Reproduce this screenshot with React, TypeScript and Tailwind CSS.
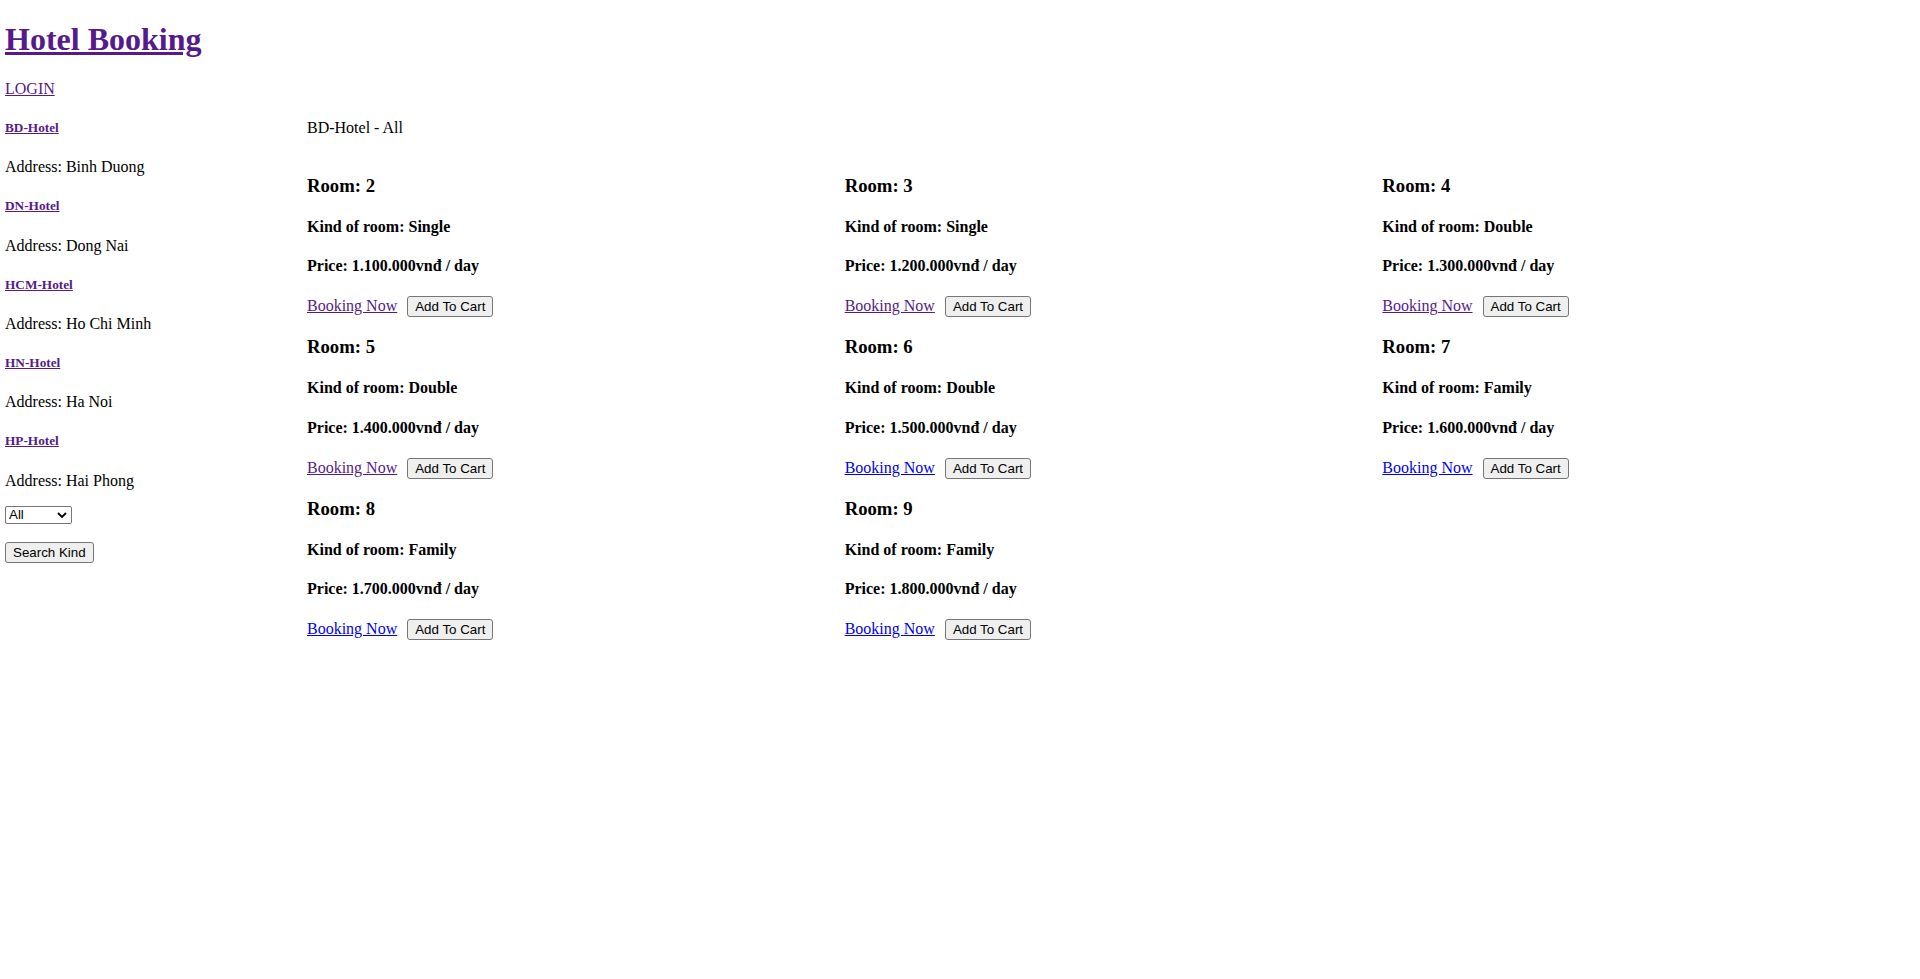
import { useState } from 'react'

interface Hotel {
  code: string;
  address: string;
}

interface Room {
  id: number;
  kind: string;
  price: string;
  visited: boolean;
}

const hotels: Hotel[] = [
  { code: 'BD-Hotel', address: 'Binh Duong' },
  { code: 'DN-Hotel', address: 'Dong Nai' },
  { code: 'HCM-Hotel', address: 'Ho Chi Minh' },
  { code: 'HN-Hotel', address: 'Ha Noi' },
  { code: 'HP-Hotel', address: 'Hai Phong' },
]

const rooms: Room[] = [
  { id: 2, kind: 'Single', price: '1.100.000', visited: true },
  { id: 3, kind: 'Single', price: '1.200.000', visited: true },
  { id: 4, kind: 'Double', price: '1.300.000', visited: true },
  { id: 5, kind: 'Double', price: '1.400.000', visited: true },
  { id: 6, kind: 'Double', price: '1.500.000', visited: false },
  { id: 7, kind: 'Family', price: '1.600.000', visited: false },
  { id: 8, kind: 'Family', price: '1.700.000', visited: false },
  { id: 9, kind: 'Family', price: '1.800.000', visited: false },
]

const btn =
  "inline-block border border-[#767676] rounded-[3px] bg-[#efefef] px-[7px] py-[2px] text-[13.33px] leading-[normal] font-['Liberation_Sans',Arial,sans-serif] text-black"

export default function App() {
  const [kind, setKind] = useState('All')

  return (
    <div className="font-['Liberation_Serif','Times_New_Roman',serif] text-base leading-[normal] text-black bg-white">
      {/* header */}
      <div className="pl-[5px]">
        <h1 className="mt-[21.44px] mb-[21.44px] text-[32px] font-bold">
          <a href="#" className="text-[#551a8b] underline">Hotel Booking</a>
        </h1>
        <p className="mt-4 mb-0">
          <a href="#" className="text-[#551a8b] underline">LOGIN</a>
        </p>
      </div>

      <div className="flex">
        {/* hotel list */}
        <div className="w-[307px] shrink-0 pl-[5px]">
          {hotels.map((h) => (
            <div key={h.code}>
              <h5 className="my-[22.18px] text-[13.28px] font-bold">
                <a href="#" className="text-[#551a8b] underline">{h.code}</a>
              </h5>
              <p className="my-4">Address: {h.address}</p>
            </div>
          ))}
          <form onSubmit={(e) => e.preventDefault()}>
            <div className="relative w-[67px] h-[18px] mt-[2px]">
              <select
                value={kind}
                onChange={(e) => setKind(e.target.value)}
                className="appearance-none block w-full h-full border border-[#767676] rounded-[2px] bg-white pl-[3px] text-[13.33px] leading-[normal] font-['Liberation_Sans',Arial,sans-serif] text-black"
              >
                <option>All</option>
                <option>Single</option>
                <option>Double</option>
                <option>Family</option>
              </select>
              <svg
                className="absolute right-[5px] top-[6px] pointer-events-none"
                width="10"
                height="6"
                viewBox="0 0 10 6"
                fill="none"
              >
                <polyline points="1,1 5,5 9,1" stroke="#000" strokeWidth="1.8" />
              </svg>
            </div>
            <button type="submit" className={btn + ' block mt-[18px]'}>Search Kind</button>
          </form>
        </div>

        {/* rooms */}
        <div className="flex-1">
          <p className="mt-[21px] mb-[19px]">BD-Hotel - All</p>
          <div className="grid grid-cols-3">
            {rooms.map((r) => (
              <div key={r.id}>
                <h3 className="my-[18.72px] text-[18.72px] font-bold">Room: {r.id}</h3>
                <h4 className="my-[21.28px] font-bold">Kind of room: {r.kind}</h4>
                <h4 className="my-[21.28px] font-bold">Price: {r.price}vnđ / day</h4>
                <div>
                  <a href="#" className={'underline ' + (r.visited ? 'text-[#551a8b]' : 'text-[#0000ee]')}>
                    Booking Now
                  </a>
                  <button type="button" className={btn + ' ml-[10px]'}>Add To Cart</button>
                </div>
              </div>
            ))}
          </div>
        </div>
      </div>
    </div>
  )
}
